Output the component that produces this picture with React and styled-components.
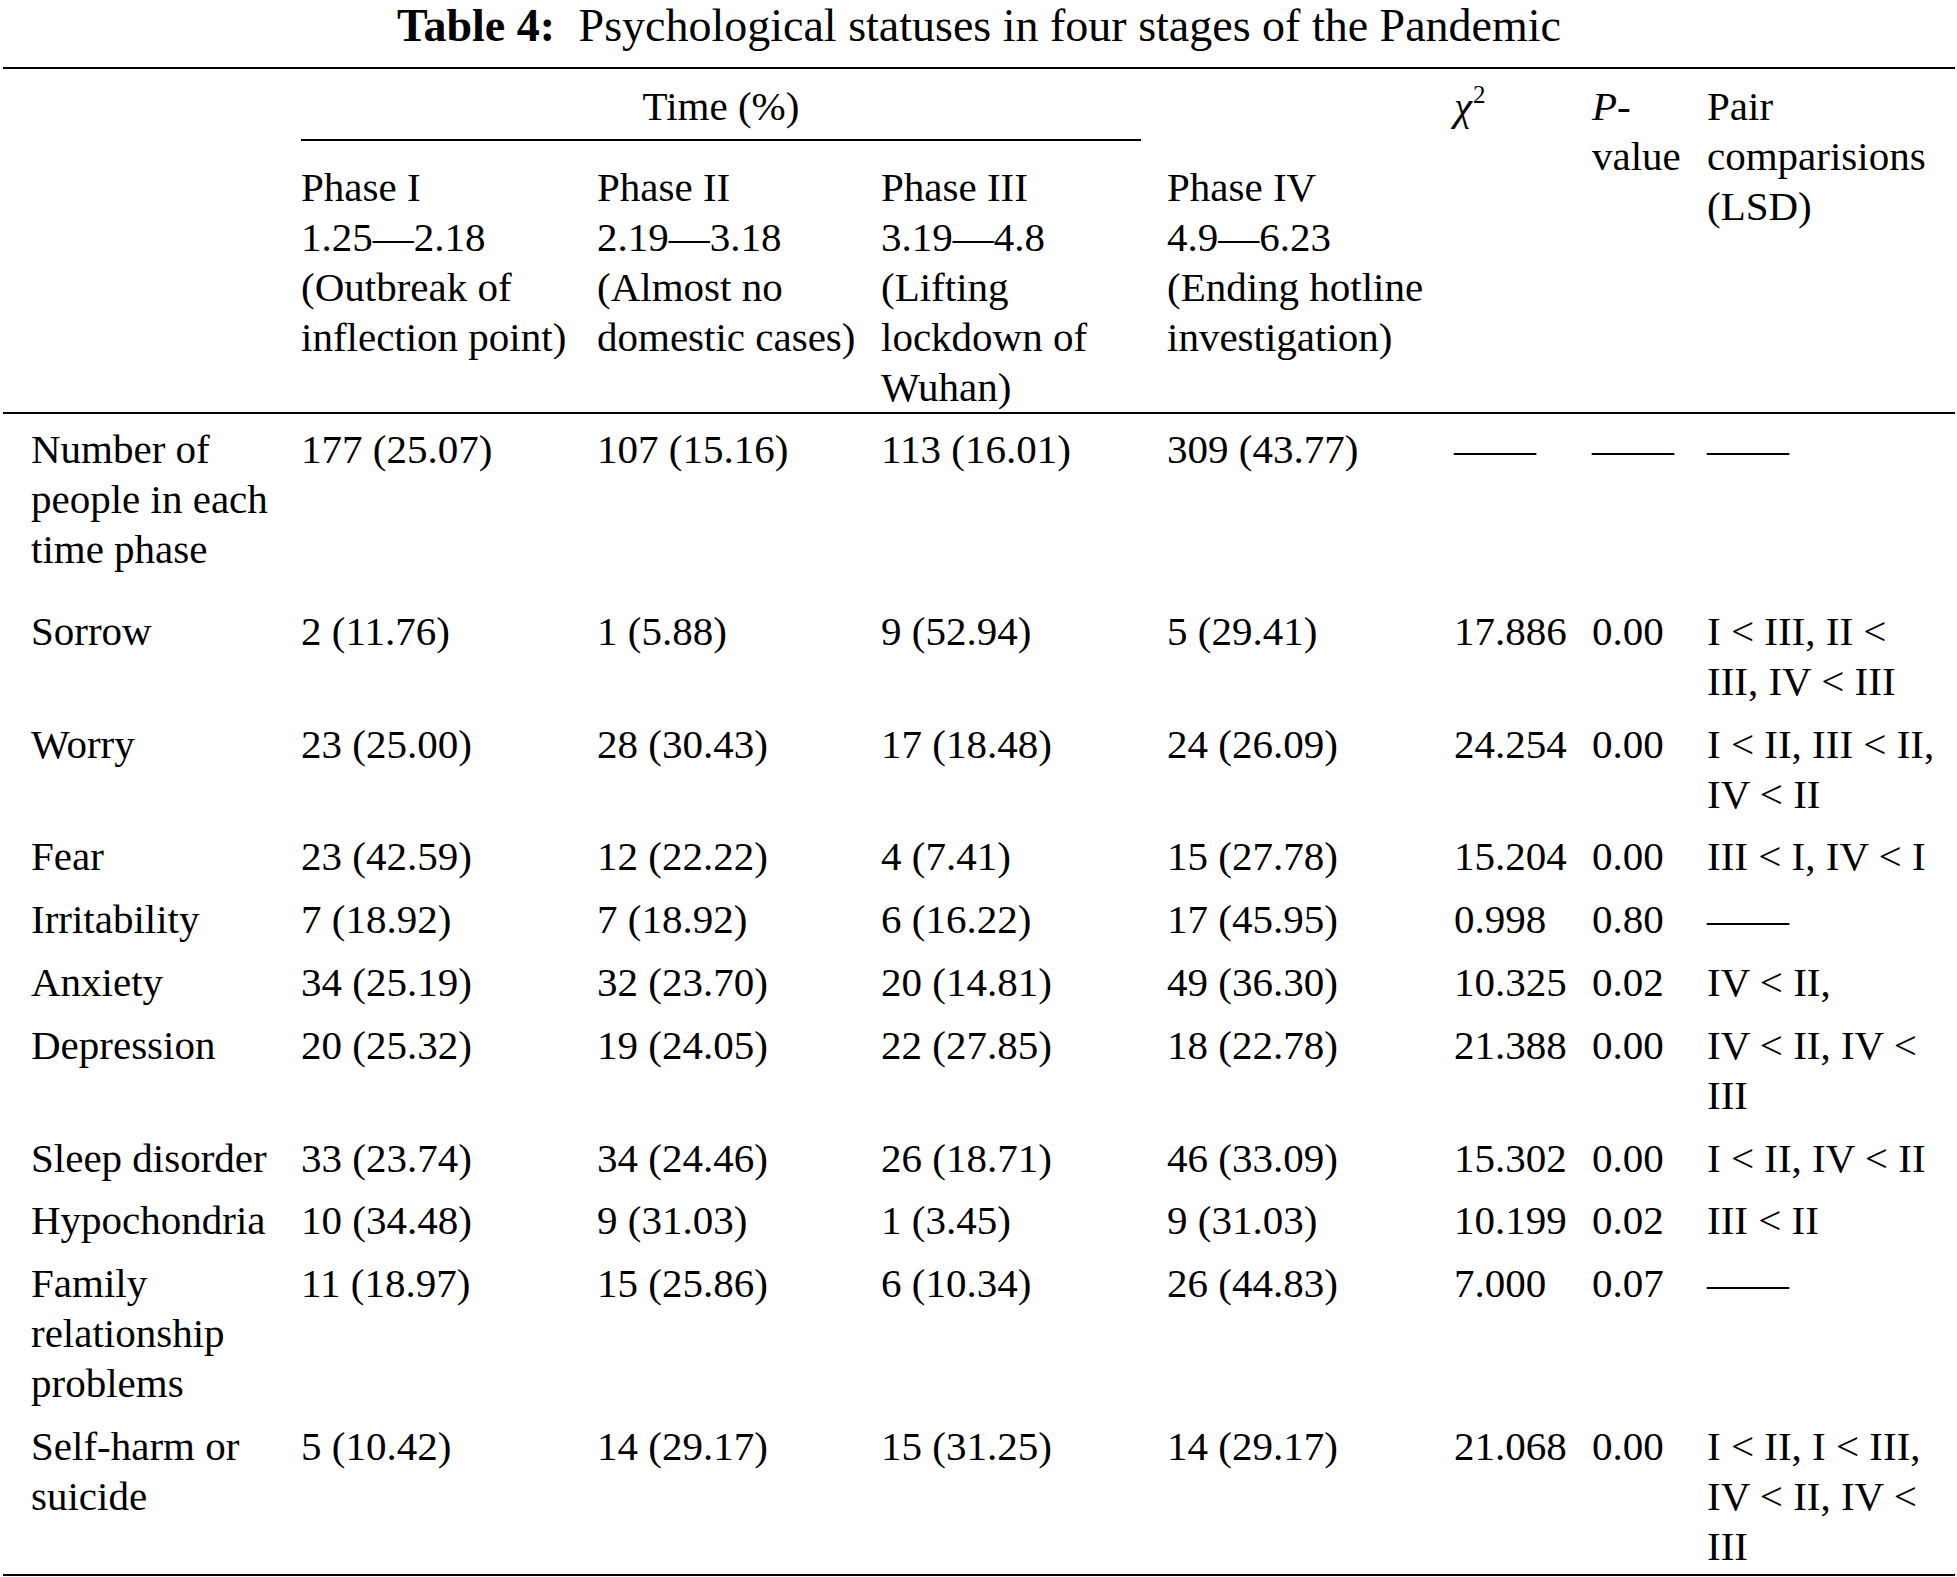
import React from "react";
import styled, { createGlobalStyle } from "styled-components";

const COLS = "298px 296px 284px 286px 287px 138px 115px 248px";

const Global = createGlobalStyle`
  html, body {
    margin: 0;
    padding: 0;
    background: #ffffff;
  }
`;

const Page = styled.div`
  width: 1952px;
  margin: 0 3px;
  font-family: "Liberation Serif", "Times New Roman", serif;
  color: #000;
  font-size: 41px;
  line-height: 50px;
`;

const Title = styled.h1`
  margin: 0 0 16px;
  font-size: 46px;
  font-weight: normal;
  line-height: 51px;
  text-align: center;
  white-space: nowrap;
`;

const TitleLabel = styled.strong`
  font-weight: bold;
  margin-right: 12px;
`;

const Header = styled.div`
  display: grid;
  grid-template-columns: ${COLS};
  grid-template-rows: auto auto;
  border-top: 2px solid #000;
  border-bottom: 2px solid #000;
  padding-top: 12px;
`;

const TimeCell = styled.div`
  grid-column: 2 / 5;
  grid-row: 1;
  margin-right: 26px;
  padding-bottom: 8px;
  border-bottom: 2px solid #000;
  text-align: center;
  white-space: nowrap;
`;

const PhaseCell = styled.div`
  grid-column: ${(p) => p.$col};
  grid-row: 2;
  padding-top: 21px;
  white-space: nowrap;
`;

const StatHead = styled.div`
  grid-column: ${(p) => p.$col};
  grid-row: 1 / 3;
  align-self: start;
  white-space: nowrap;
`;

const Line = styled.span`
  display: block;
  white-space: nowrap;
`;

const Italic = styled.i`
  font-style: italic;
`;

const Sup = styled.sup`
  font-size: 25px;
  line-height: 0;
  vertical-align: 17px;
  margin-left: 1px;
`;

const Body = styled.div`
  border-bottom: 2px solid #000;
`;

const Row = styled.div`
  display: grid;
  grid-template-columns: ${COLS};
  padding-top: ${(p) => p.$pt}px;
  padding-bottom: ${(p) => p.$pb}px;
`;

const Cell = styled.div`
  padding-left: ${(p) => (p.$label ? "28px" : "0")};
  white-space: nowrap;
`;

const DASH = "\u2014\u2014";

const phases = [
  ["Phase I", "1.25\u20142.18", "(Outbreak of", "inflection point)"],
  ["Phase II", "2.19\u20143.18", "(Almost no", "domestic cases)"],
  ["Phase III", "3.19\u20144.8", "(Lifting", "lockdown of", "Wuhan)"],
  ["Phase IV", "4.9\u20146.23", "(Ending hotline", "investigation)"],
];

const rows = [
  [["Number of", "people in each", "time phase"], "177 (25.07)", "107 (15.16)", "113 (16.01)", "309 (43.77)", DASH, DASH, [DASH]],
  [["Sorrow"], "2 (11.76)", "1 (5.88)", "9 (52.94)", "5 (29.41)", "17.886", "0.00", ["I < III, II <", "III, IV < III"]],
  [["Worry"], "23 (25.00)", "28 (30.43)", "17 (18.48)", "24 (26.09)", "24.254", "0.00", ["I < II, III < II,", "IV < II"]],
  [["Fear"], "23 (42.59)", "12 (22.22)", "4 (7.41)", "15 (27.78)", "15.204", "0.00", ["III < I, IV < I"]],
  [["Irritability"], "7 (18.92)", "7 (18.92)", "6 (16.22)", "17 (45.95)", "0.998", "0.80", [DASH]],
  [["Anxiety"], "34 (25.19)", "32 (23.70)", "20 (14.81)", "49 (36.30)", "10.325", "0.02", ["IV < II,"]],
  [["Depression"], "20 (25.32)", "19 (24.05)", "22 (27.85)", "18 (22.78)", "21.388", "0.00", ["IV < II, IV <", "III"]],
  [["Sleep disorder"], "33 (23.74)", "34 (24.46)", "26 (18.71)", "46 (33.09)", "15.302", "0.00", ["I < II, IV < II"]],
  [["Hypochondria"], "10 (34.48)", "9 (31.03)", "1 (3.45)", "9 (31.03)", "10.199", "0.02", ["III < II"]],
  [["Family", "relationship", "problems"], "11 (18.97)", "15 (25.86)", "6 (10.34)", "26 (44.83)", "7.000", "0.07", [DASH]],
  [["Self-harm or", "suicide"], "5 (10.42)", "14 (29.17)", "15 (31.25)", "14 (29.17)", "21.068", "0.00", ["I < II, I < III,", "IV < II, IV <", "III"]],
];

export default function App() {
  return (
    <Page>
      <Global />
      <Title>
        <TitleLabel>Table 4:</TitleLabel> Psychological statuses in four stages of the Pandemic
      </Title>
      <Header>
        <TimeCell>Time (%)</TimeCell>
        {phases.map((lines, i) => (
          <PhaseCell key={i} $col={i + 2}>
            {lines.map((l, j) => (
              <Line key={j}>{l}</Line>
            ))}
          </PhaseCell>
        ))}
        <StatHead $col={6}>
          <Italic>χ</Italic>
          <Sup>2</Sup>
        </StatHead>
        <StatHead $col={7}>
          <Line>
            <Italic>P</Italic>-
          </Line>
          <Line>value</Line>
        </StatHead>
        <StatHead $col={8}>
          <Line>Pair</Line>
          <Line>comparisions</Line>
          <Line>(LSD)</Line>
        </StatHead>
      </Header>
      <Body>
        {rows.map((r, i) => {
          const first = i === 0;
          const last = i === rows.length - 1;
          return (
            <Row key={i} $pt={first ? 10 : 12.8} $pb={first ? 19 : last ? 3 : 0}>
              <Cell $label>
                {r[0].map((l, j) => (
                  <Line key={j}>{l}</Line>
                ))}
              </Cell>
              {r.slice(1, 7).map((v, j) => (
                <Cell key={j}>{v}</Cell>
              ))}
              <Cell>
                {r[7].map((l, j) => (
                  <Line key={j}>{l}</Line>
                ))}
              </Cell>
            </Row>
          );
        })}
      </Body>
    </Page>
  );
}
